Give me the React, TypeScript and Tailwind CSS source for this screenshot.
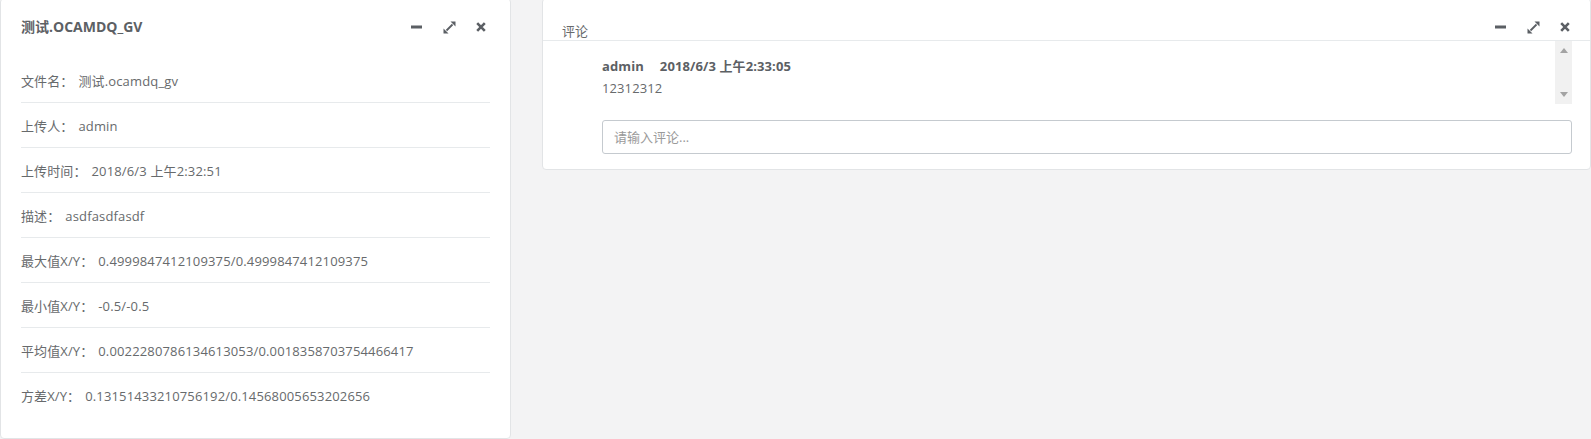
const info = [
  { label: "文件名：", value: "测试.ocamdq_gv" },
  { label: "上传人：", value: "admin" },
  { label: "上传时间：", value: "2018/6/3 上午2:32:51" },
  { label: "描述：", value: "asdfasdfasdf" },
  { label: "最大值X/Y：", value: "0.4999847412109375/0.4999847412109375" },
  { label: "最小值X/Y：", value: "-0.5/-0.5" },
  { label: "平均值X/Y：", value: "0.0022280786134613053/0.0018358703754466417" },
  { label: "方差X/Y：", value: "0.13151433210756192/0.14568005653202656" },
];

function Tools() {
  return (
    <div className="flex items-center gap-[20px] text-[#5b5f64]">
      <svg width="12" height="12" viewBox="0 0 12 12">
        <rect x="0" y="4.5" width="11" height="3" fill="currentColor" />
      </svg>
      <svg width="13" height="13" viewBox="0 0 13 13">
        <path d="M3.5 9.5 L9.5 3.5" stroke="currentColor" strokeWidth="1.8" />
        <path d="M12.5 0.5 L12.5 5.5 L7.5 0.5 Z" fill="currentColor" />
        <path d="M0.5 12.5 L0.5 7.5 L5.5 12.5 Z" fill="currentColor" />
      </svg>
      <svg width="10" height="10" viewBox="0 0 10 10">
        <path d="M1.2 1.2 L8.8 8.8 M8.8 1.2 L1.2 8.8" stroke="currentColor" strokeWidth="2.6" />
      </svg>
    </div>
  );
}

function FileInfo() {
  return (
    <div className="w-[511px] shrink-0 h-[441px] bg-white border border-[#e2e4e6] rounded-[4px]">
      <div className="h-[56px] flex items-center justify-between pl-[20px] pr-[24px]">
        <h5 className="text-[14px] font-bold text-[#5c6064] leading-[18px]">测试.OCAMDQ_GV</h5>
        <Tools />
      </div>
      <div className="pt-[3px] px-[20px]">
        {info.map((row, i) => (
          <div
            key={row.label}
            className={"h-[45px] pt-[3px] flex items-center " + (i < info.length - 1 ? "border-b border-[#e7eaec]" : "")}
          >
            <span className="tracking-[0.1px]">{row.label}</span>
            <span className="ml-[5px] tracking-[0.15px]">{row.value}</span>
          </div>
        ))}
      </div>
    </div>
  );
}

function Comments() {
  return (
    <div className="flex-1 bg-white border border-[#e2e4e6] rounded-[4px] h-[172px]">
      <div className="h-[42px] flex items-start justify-between border-b border-[#e7eaec] pl-[19px] pr-[20px]">
        <span className="pt-[23px] leading-[18px]">评论</span>
        <div className="mt-[18px] h-[20px] flex items-center">
          <Tools />
        </div>
      </div>
      <div className="pl-[59px] pr-[18px] pb-[15px]">
        <div className="h-[63px] flex">
          <div className="flex-1 pt-[14px]">
            <div className="leading-[22px] font-bold text-[#5c6064] tracking-[0.1px]">
              admin<span className="ml-[16px]">2018/6/3 上午2:33:05</span>
            </div>
            <div className="leading-[22px] tracking-[0.1px]">12312312</div>
          </div>
          <div className="w-[17px] h-full bg-[#f1f1f1] flex flex-col items-center justify-between py-[7px]">
            <svg width="8" height="5" viewBox="0 0 8 5">
              <path d="M0 5 L4 0 L8 5 Z" fill="#a3a3a3" />
            </svg>
            <svg width="8" height="5" viewBox="0 0 8 5">
              <path d="M0 0 L8 0 L4 5 Z" fill="#a3a3a3" />
            </svg>
          </div>
        </div>
        <input
          className="mt-[16px] w-full h-[34px] border border-[#c5cacf] rounded-[3px] pl-[11px] outline-none placeholder:text-[#9a9a9a] text-[13px]"
          placeholder="请输入评论..."
        />
      </div>
    </div>
  );
}

export default function App() {
  return (
    <div
      className="w-[1591px] h-[439px] overflow-hidden bg-[#f3f3f4] text-[13px] text-[#676a6c]"
      style={{ fontFamily: '"Open Sans", "Noto Sans CJK SC", sans-serif' }}
    >
      <div className="flex items-start gap-[31px] -mt-[2px]">
        <FileInfo />
        <Comments />
      </div>
    </div>
  );
}
